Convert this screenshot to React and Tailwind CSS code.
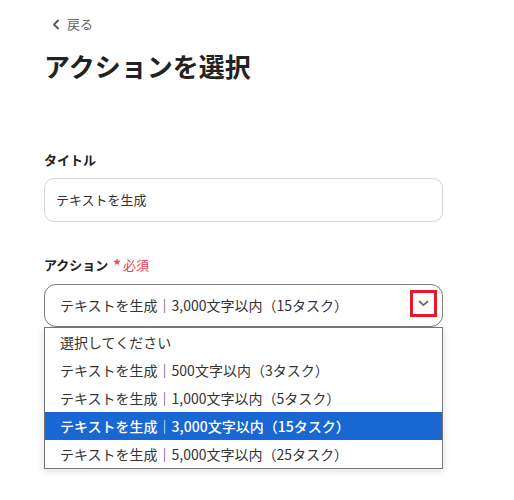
import React from 'react';

const font = { fontFamily: '"Noto Sans CJK JP", "Noto Sans", sans-serif' };

const options = [
  { label: '選択してください' },
  { label: 'テキストを生成｜500文字以内（3タスク）' },
  { label: 'テキストを生成｜1,000文字以内（5タスク）' },
  { label: 'テキストを生成｜3,000文字以内（15タスク）', active: true },
  { label: 'テキストを生成｜5,000文字以内（25タスク）' },
];

export default function App() {
  return (
    <div className="min-h-[500px] w-[514px] bg-white" style={font}>
      <div className="pl-[44px] pt-[14px]">
        <button type="button" className="flex h-5 items-center gap-[7px] pl-[8px] text-[13px] text-[#666]">
          <svg width="8" height="11" viewBox="0 0 8 11" fill="none">
            <path d="M6 1.5L2 5.5L6 9.5" stroke="#555" strokeWidth="1.8" strokeLinecap="round" strokeLinejoin="round" />
          </svg>
          戻る
        </button>

        <h1 className="mt-[14px] h-9 text-[26px] font-bold leading-9 text-[#222]">アクションを選択</h1>

        <div className="mt-[66px] w-[399px]">
          <label className="block h-5 text-[13px] font-bold leading-5 text-[#222]">タイトル</label>
          <div className="mt-[8px] flex h-[44px] items-center rounded-[10px] border border-[#d3d7de] px-[11px] text-[13px] text-[#333]">
            テキストを生成
          </div>

          <div className="mt-[33px] flex h-5 items-center text-[13px] leading-5">
            <span className="font-bold text-[#222]">アクション</span>
            <span className="ml-[5px] text-[15px] font-bold text-[#ef3d56]">*</span>
            <span className="ml-[2px] text-[13px] text-[#ef3d56]">必須</span>
          </div>

          <div className="relative mt-[9px]">
            <div className="flex h-[43px] items-center rounded-[12px] border border-[#7a7a7a] px-[15px] text-[14px] text-[#333]">
              テキストを生成｜3,000文字以内（15タスク）
            </div>
            <div className="absolute right-[6px] top-[6px] flex h-[27px] w-[27px] items-center justify-center border-[3px] border-[#e8192c]">
              <svg width="11" height="7" viewBox="0 0 11 7" fill="none">
                <path d="M1.5 1.5L5.5 5.2L9.5 1.5" stroke="#6b6b6b" strokeWidth="1.8" strokeLinecap="round" strokeLinejoin="round" />
              </svg>
            </div>
            <ul className="absolute left-0 right-0 top-full border border-[#767676] bg-white shadow-[0_2px_8px_rgba(0,0,0,0.12)]">
              {options.map((o) => (
                <li
                  key={o.label}
                  className={`flex h-[28px] items-center px-[15px] text-[14px] ${
                    o.active ? 'bg-[#1967d2] font-medium text-white' : 'text-[#333]'
                  }`}
                >
                  {o.label}
                </li>
              ))}
            </ul>
          </div>
        </div>
      </div>
    </div>
  );
}
